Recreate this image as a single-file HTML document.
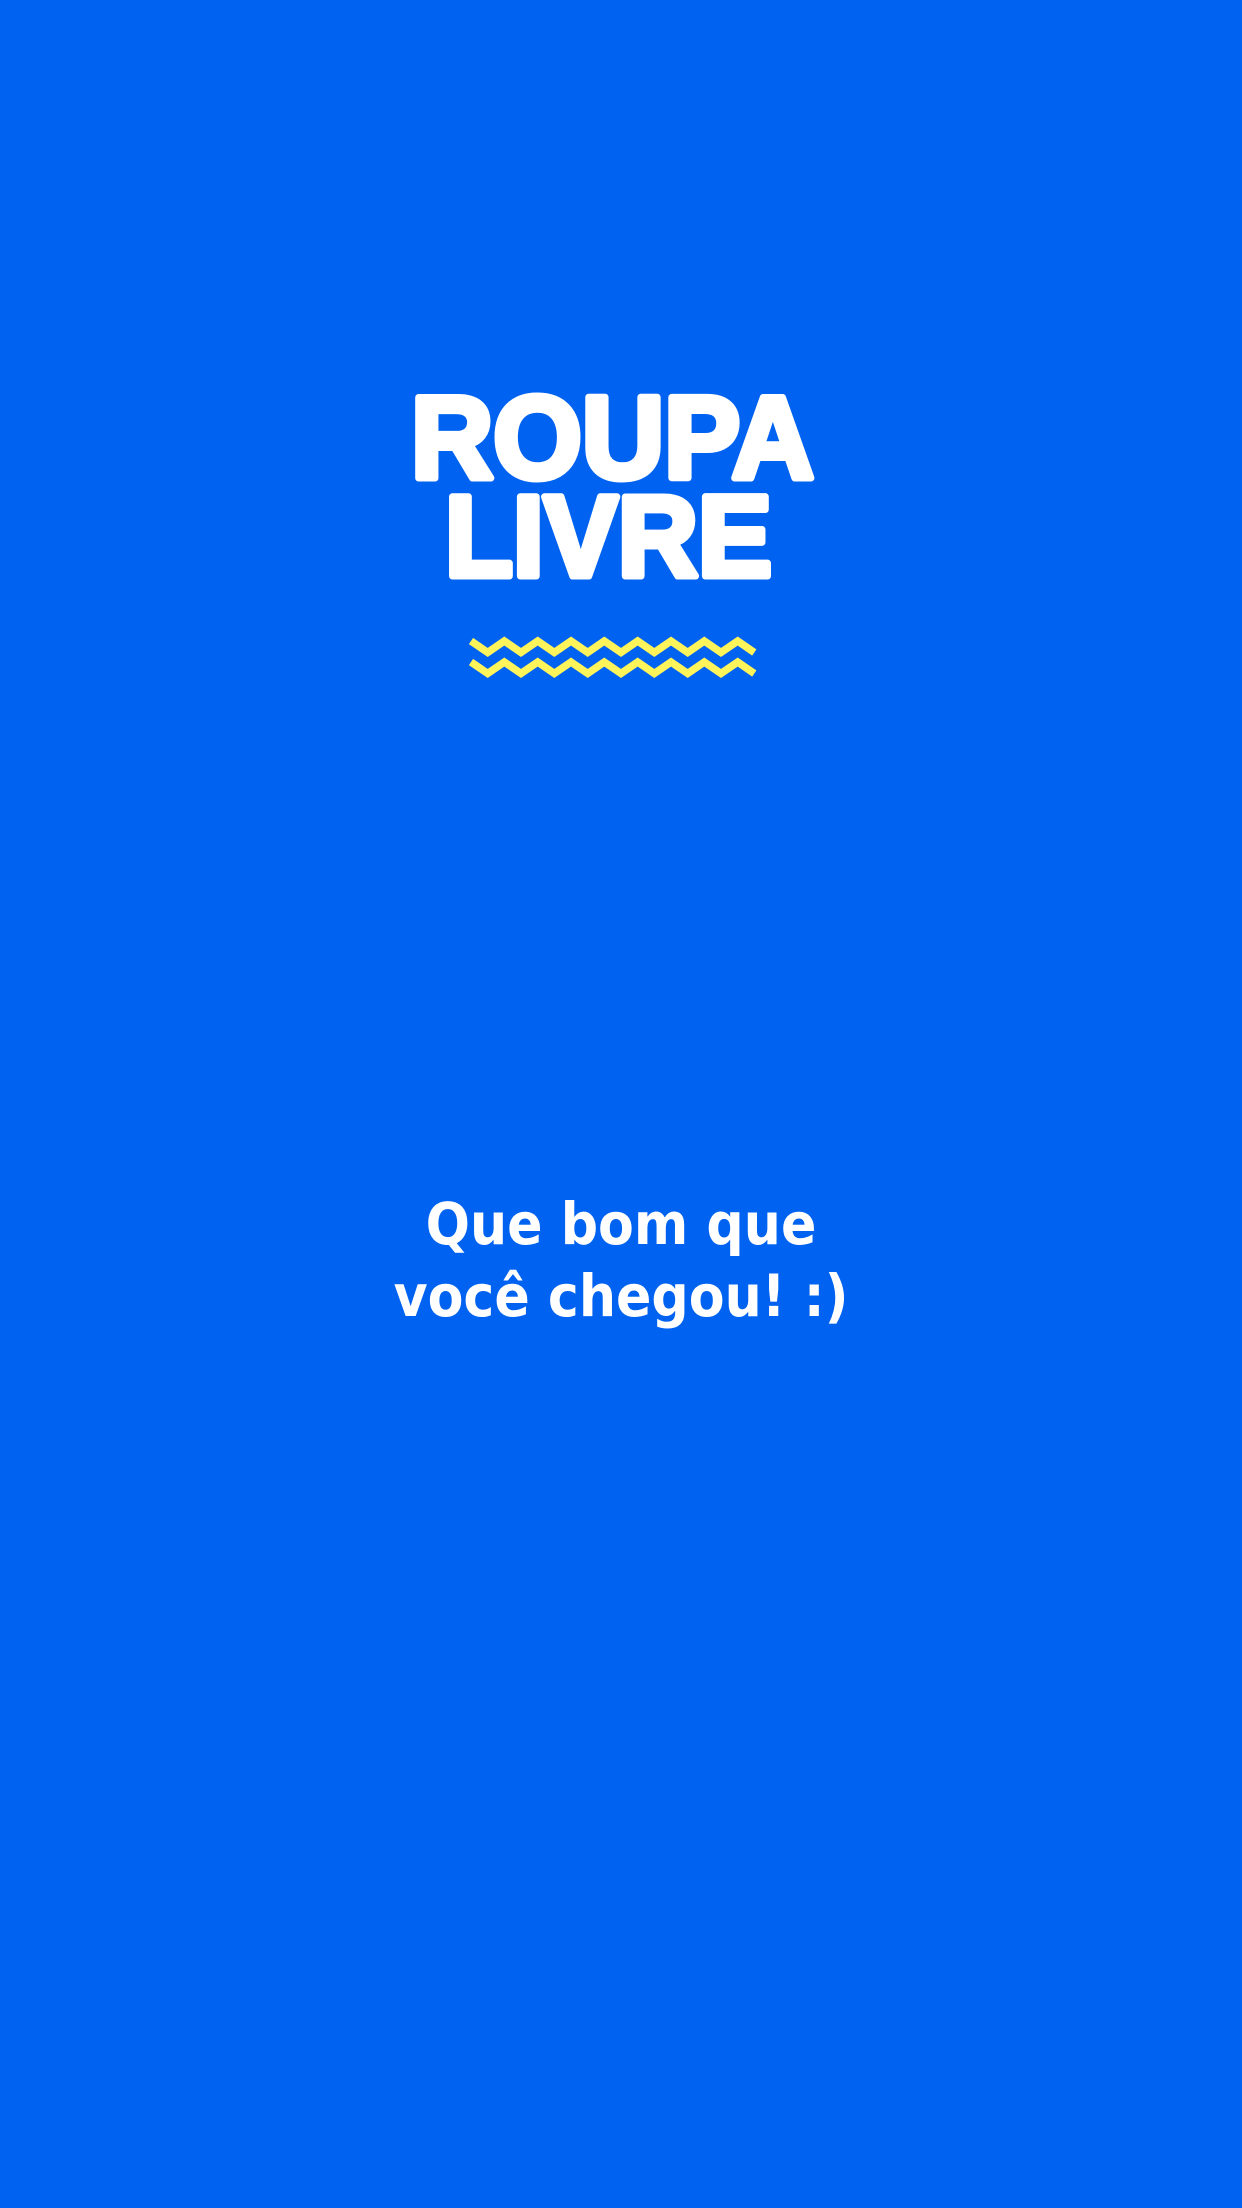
<!DOCTYPE html>
<html><head><meta charset="utf-8"><style>
html,body{margin:0;padding:0;}
body{width:1242px;height:2208px;background:#0062F1;position:relative;overflow:hidden;}
svg{position:absolute;left:0;top:0;}
.t{position:absolute;left:0;width:1242px;text-align:center;color:#fff;font-family:"DejaVu Sans Condensed","DejaVu Sans","Liberation Sans",sans-serif;font-stretch:condensed;font-weight:700;font-size:58px;line-height:72px;top:1188px;letter-spacing:0px;}
</style></head><body>
<svg width="1242" height="800" viewBox="0 0 1242 800">
<g fill="#fff" stroke="#fff" stroke-width="7" stroke-linejoin="round" font-family="Liberation Sans" font-weight="700">
<text x="411" y="478" textLength="403" lengthAdjust="spacingAndGlyphs" font-size="117">ROUPA</text>
<text x="445" y="576" textLength="327" lengthAdjust="spacingAndGlyphs" font-size="115">LIVRE</text>
</g>
<g fill="none" stroke="#FFF55A" stroke-width="7.5" stroke-linejoin="miter">
<polyline points="471,641 487.7,652.5 504.3,641 521,652.5 537.7,641 554.3,652.5 571,641 587.7,652.5 604.3,641 621,652.5 637.7,641 654.3,652.5 671,641 687.7,652.5 704.3,641 721,652.5 737.7,641 754.3,652.5"/>
<polyline points="471,662 487.7,673.5 504.3,662 521,673.5 537.7,662 554.3,673.5 571,662 587.7,673.5 604.3,662 621,673.5 637.7,662 654.3,673.5 671,662 687.7,673.5 704.3,662 721,673.5 737.7,662 754.3,673.5"/>
</g>
</svg>
<div class="t">Que bom que<br>você chegou! :)</div>
</body></html>
